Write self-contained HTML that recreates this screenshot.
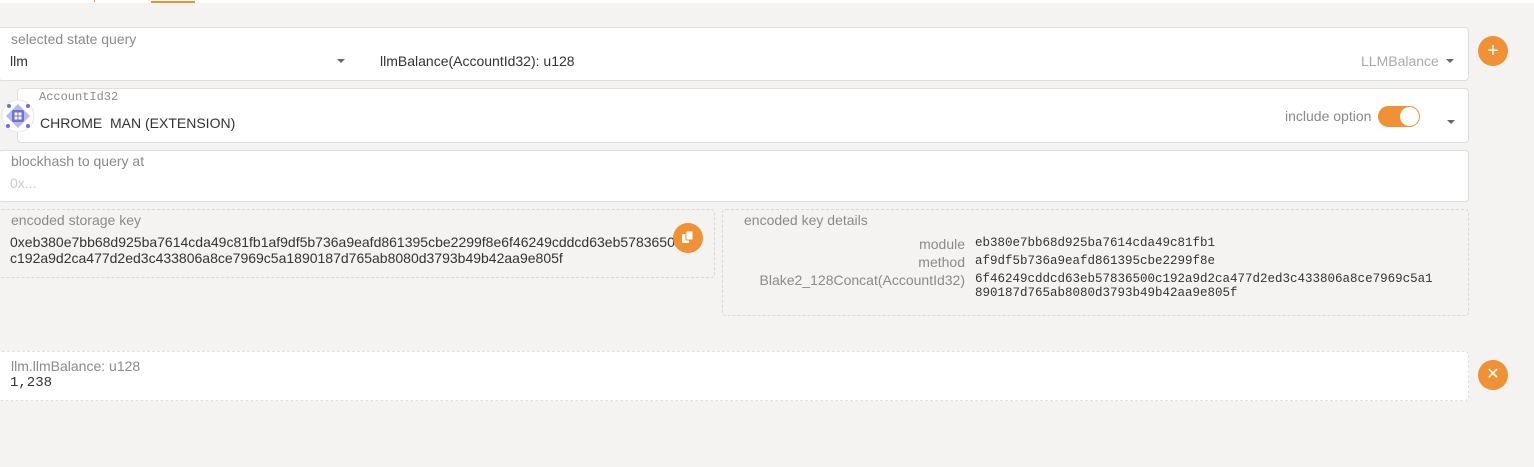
<!DOCTYPE html>
<html><head><style>
body{margin:0;width:1534px;height:467px;background:#f4f3f1;font-family:"Liberation Sans",sans-serif;position:relative;overflow:hidden}
.a{position:absolute}
.box{position:absolute;background:#fff;border:1px solid #dedede;border-radius:4px;box-sizing:border-box}
.dash{position:absolute;border:1px dashed #d8d8d8;border-radius:4px;box-sizing:border-box}
.lbl{position:absolute;font-size:14px;color:#8a8a8a;white-space:nowrap}
.val{position:absolute;font-size:14px;color:#333;white-space:nowrap}
.mono{font-family:"Liberation Mono",monospace}
.arr{position:absolute;width:0;height:0;border-left:4px solid transparent;border-right:4px solid transparent;border-top:4px solid #666}
.btn{position:absolute;width:30px;height:30px;border-radius:50%;background:#f19135;color:#fff;text-align:center;line-height:30px;font-size:20px}
.r{text-align:right;right:569px}
</style></head><body>
<div class="a" style="left:0;top:0;width:1534px;height:3px;background:#fff"></div>
<div class="a" style="left:151px;top:1px;width:44px;height:2px;background:#f19135"></div>
<div class="a" style="left:94px;top:0;width:1px;height:2px;background:#f19135"></div>

<div class="box" style="left:-2px;top:27px;width:1471px;height:54px"></div>
<div class="lbl" style="left:11px;top:31px">selected state query</div>
<div class="val" style="left:10px;top:53px">llm</div>
<div class="arr" style="left:337px;top:59px"></div>
<div class="val" style="left:380px;top:53px">llmBalance(AccountId32): u128</div>
<div class="lbl" style="left:1361px;top:53px;color:#aaa">LLMBalance</div>
<div class="arr" style="left:1446px;top:59px"></div>
<div class="btn" style="left:1478px;top:36px">+</div>

<div class="box" style="left:17px;top:88px;width:1452px;height:55px"></div>
<svg class="a" style="left:1px;top:99px" width="34" height="34" viewBox="0 0 34 34">
<circle cx="17" cy="17" r="16" fill="#fff" stroke="#e6e6e6"/>
<polygon points="17,5 29,17 17,29 5,17" fill="#b7b9ef"/>
<rect x="11" y="11" width="12" height="12" rx="2" fill="#6d72d1"/>
<rect x="13.5" y="13.5" width="3" height="3" fill="#fff"/><rect x="17.5" y="13.5" width="3" height="3" fill="#fff"/>
<rect x="13.5" y="17.5" width="3" height="3" fill="#fff"/><rect x="17.5" y="17.5" width="3" height="3" fill="#fff"/>
<circle cx="8" cy="7" r="2" fill="#6d72d1"/><circle cx="27" cy="7" r="2" fill="#6d72d1"/>
<circle cx="7" cy="27" r="2" fill="#6d72d1"/><circle cx="27" cy="27" r="2" fill="#6d72d1"/>
</svg>
<div class="lbl mono" style="left:39px;top:90px;font-size:12px">AccountId32</div>
<div class="val" style="left:40px;top:115px">CHROME&nbsp; MAN (EXTENSION)</div>
<div class="lbl" style="left:1285px;top:108px">include option</div>
<div class="a" style="left:1378px;top:106px;width:42px;height:21px;border-radius:11px;background:#f19135"></div>
<div class="a" style="left:1400px;top:107px;width:19px;height:19px;border-radius:50%;background:#fff"></div>
<div class="arr" style="left:1447px;top:120px"></div>

<div class="box" style="left:-2px;top:150px;width:1471px;height:52px"></div>
<div class="lbl" style="left:11px;top:153px">blockhash to query at</div>
<div class="lbl" style="left:10px;top:175px;color:#ccc">0x...</div>

<div class="dash" style="left:-2px;top:209px;width:717px;height:69px"></div>
<div class="lbl" style="left:11px;top:212px">encoded storage key</div>
<div class="val" style="left:10px;top:234px;line-height:16px">0xeb380e7bb68d925ba7614cda49c81fb1af9df5b736a9eafd861395cbe2299f8e6f46249cddcd63eb5783650<br>c192a9d2ca477d2ed3c433806a8ce7969c5a1890187d765ab8080d3793b49b42aa9e805f</div>
<div class="btn" style="left:673px;top:223px"><svg width="14" height="16" viewBox="0 0 14 16" style="margin-top:7px"><rect x="1" y="4" width="7" height="9" rx="1" fill="#fff"/><rect x="5" y="1" width="7" height="9" rx="1" fill="#fff" stroke="#f19135" stroke-width="1"/></svg></div>

<div class="dash" style="left:722px;top:209px;width:747px;height:107px"></div>
<div class="lbl" style="left:744px;top:212px">encoded key details</div>
<div class="lbl r" style="top:236px">module</div>
<div class="lbl r" style="top:254px">method</div>
<div class="lbl r" style="top:272px">Blake2_128Concat(AccountId32)</div>
<div class="val mono" style="left:975px;top:236px;font-size:12.5px">eb380e7bb68d925ba7614cda49c81fb1</div>
<div class="val mono" style="left:975px;top:254px;font-size:12.5px">af9df5b736a9eafd861395cbe2299f8e</div>
<div class="val mono" style="left:975px;top:272px;font-size:12.5px;line-height:14px">6f46249cddcd63eb57836500c192a9d2ca477d2ed3c433806a8ce7969c5a1<br>890187d765ab8080d3793b49b42aa9e805f</div>

<div class="box" style="left:-2px;top:351px;width:1471px;height:50px;border:1px dashed #e2e2e2"></div>
<div class="lbl" style="left:11px;top:358px">llm.llmBalance: u128</div>
<div class="val mono" style="left:10px;top:375px">1,238</div>
<div class="btn" style="left:1478px;top:360px;font-size:16px">✕</div>
</body></html>
